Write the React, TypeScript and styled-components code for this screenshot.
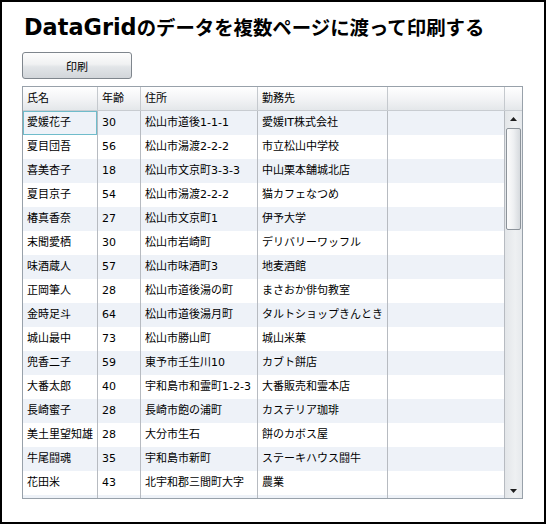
import React from 'react'
import styled, { createGlobalStyle } from 'styled-components'

const GlobalStyle = createGlobalStyle`
  html, body {
    margin: 0;
    padding: 0;
    background: #fff;
  }
`

const Frame = styled.div`
  width: 546px;
  height: 524px;
  box-sizing: border-box;
  border: 2px solid #000;
  padding: 13px 0 0 20px;
  background: #fff;
  display: flex;
  flex-direction: column;
  align-items: flex-start;
  font-family: 'DejaVu Sans', 'Noto Sans CJK JP', sans-serif;
`

const Title = styled.h1`
  margin: 0 0 0 2px;
  height: 24px;
  font: bold 19.4px/24px 'Noto Sans CJK JP', sans-serif;
  color: #000;
  white-space: nowrap;
`

const Latin = styled.span`
  font-family: 'DejaVu Sans', sans-serif;
  font-size: 22.4px;
  line-height: 1;
`

const PrintButton = styled.button`
  margin-top: 13px;
  width: 110px;
  height: 27px;
  box-sizing: border-box;
  border: 1px solid #7f868d;
  border-radius: 3px;
  background: linear-gradient(to bottom, #fdfdfd 0%, #f0f1f2 45%, #e2e5e8 55%, #d2d6da 100%);
  font: 11px 'Noto Sans CJK JP', sans-serif;
  color: #000;
  padding: 0;
`

const Grid = styled.div`
  margin-top: 7px;
  width: 501px;
  height: 413px;
  box-sizing: border-box;
  border: 1px solid #98a1aa;
  display: flex;
  background: #fff;
  overflow: hidden;
`

const Main = styled.div`
  width: 482px;
  display: flex;
  flex-direction: column;
  overflow: hidden;
`

const columns = '75px 43px 117px 130px 117px'

const HeaderRow = styled.div`
  display: grid;
  grid-template-columns: ${columns};
  height: 24px;
  box-sizing: border-box;
  border-bottom: 1px solid #c8ccd1;
  background: linear-gradient(to bottom, #ffffff 0%, #f3f4f6 50%, #e4e7ea 100%);
`

const HeaderCell = styled.div`
  box-sizing: border-box;
  border-right: 1px solid #c5c9ce;
  padding-left: 4px;
  font-size: 11px;
  line-height: 23px;
  color: #000;
  white-space: nowrap;
`

const Body = styled.div`
  flex: 1;
  overflow: hidden;
`

const Row = styled.div<{ $alt: boolean }>`
  display: grid;
  grid-template-columns: ${columns};
  height: 24px;
  background: ${(p) => (p.$alt ? '#eef2f8' : '#ffffff')};
`

const Cell = styled.div<{ $selected?: boolean }>`
  box-sizing: border-box;
  border-right: 1px solid #b7bbc1;
  padding-left: 4px;
  font-size: 11px;
  line-height: 24px;
  color: #000;
  white-space: nowrap;
  overflow: hidden;
  box-shadow: ${(p) => (p.$selected ? 'inset 0 0 0 1px #6fbccb' : 'none')};
`

const ScrollColumn = styled.div`
  width: 17px;
  display: flex;
  flex-direction: column;
`

const Corner = styled.div`
  height: 24px;
  box-sizing: border-box;
  border-bottom: 1px solid #c8ccd1;
  background: linear-gradient(to bottom, #ffffff 0%, #f3f4f6 50%, #e4e7ea 100%);
`

const Track = styled.div`
  flex: 1;
  display: flex;
  flex-direction: column;
  background: linear-gradient(to right, #e3e6e9 0%, #eef0f2 60%, #e6e9ec 100%);
`

const ArrowButton = styled.div`
  height: 15px;
  display: flex;
  align-items: center;
  justify-content: center;
`

const Thumb = styled.div`
  margin: 2px 1px 0 1px;
  height: 102px;
  box-sizing: border-box;
  border: 1px solid #8c939a;
  border-radius: 2px;
  background: linear-gradient(to right, #fcfcfc 0%, #eef0f2 50%, #d6dade 100%);
`

const Spacer = styled.div`
  flex: 1;
`

const Arrow = ({ up }: { up: boolean }) => (
  <svg width="7" height="4" viewBox="0 0 7 4">
    <polygon points={up ? '3.5,0 7,4 0,4' : '0,0 7,0 3.5,4'} fill="#1e1e1e" />
  </svg>
)

const headers = ['氏名', '年齢', '住所', '勤務先', '']

const people: [string, string, string, string][] = [
  ['愛媛花子', '30', '松山市道後1-1-1', '愛媛IT株式会社'],
  ['夏目団吾', '56', '松山市湯渡2-2-2', '市立松山中学校'],
  ['喜美杏子', '18', '松山市文京町3-3-3', '中山栗本舗城北店'],
  ['夏目京子', '54', '松山市湯渡2-2-2', '猫カフェなつめ'],
  ['椿真香奈', '27', '松山市文京町1', '伊予大学'],
  ['末聞愛栖', '30', '松山市岩崎町', 'デリバリーワッフル'],
  ['味酒蔵人', '57', '松山市味酒町3', '地麦酒館'],
  ['正岡筆人', '28', '松山市道後湯の町', 'まさおか俳句教室'],
  ['金時足斗', '64', '松山市道後湯月町', 'タルトショップきんとき'],
  ['城山最中', '73', '松山市勝山町', '城山米菓'],
  ['兜香二子', '59', '東予市壬生川10', 'カブト餅店'],
  ['大番太郎', '40', '宇和島市和霊町1-2-3', '大番販売和霊本店'],
  ['長崎蜜子', '28', '長崎市飽の浦町', 'カステリア珈琲'],
  ['美土里望知雄', '28', '大分市生石', '餅のカボス屋'],
  ['牛尾闘魂', '35', '宇和島市新町', 'ステーキハウス闘牛'],
  ['花田米', '43', '北宇和郡三間町大字', '農業'],
  // the next row is scrolled mostly out of view; only its top edge shows
  ['', '', '', ''],
]

export default function App() {
  return (
    <>
      <GlobalStyle />
      <Frame>
        <Title>
          <Latin>DataGrid</Latin>のデータを複数ページに渡って印刷する
        </Title>
        <PrintButton>印刷</PrintButton>
        <Grid>
          <Main>
            <HeaderRow>
              {headers.map((h, i) => (
                <HeaderCell key={i}>{h}</HeaderCell>
              ))}
            </HeaderRow>
            <Body>
              {people.map((p, i) => (
                <Row key={i} $alt={i % 2 === 0}>
                  <Cell $selected={i === 0}>{p[0]}</Cell>
                  <Cell>{p[1]}</Cell>
                  <Cell>{p[2]}</Cell>
                  <Cell>{p[3]}</Cell>
                  <Cell />
                </Row>
              ))}
            </Body>
          </Main>
          <ScrollColumn>
            <Corner />
            <Track>
              <ArrowButton>
                <Arrow up />
              </ArrowButton>
              <Thumb />
              <Spacer />
              <ArrowButton>
                <Arrow up={false} />
              </ArrowButton>
            </Track>
          </ScrollColumn>
        </Grid>
      </Frame>
    </>
  )
}
